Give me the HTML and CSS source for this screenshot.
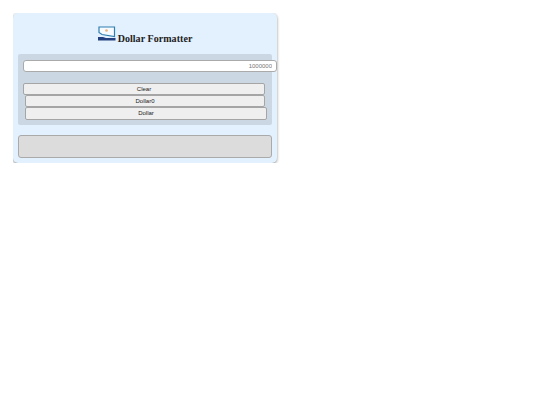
FILE: index.html
```html
<!DOCTYPE html>
<html>
<head>
    <title>Dollar Formatter</title>
    <meta http-equiv="Content-Type" content="text/html; charset=utf-8" />
    <link rel="stylesheet" href="styles.css">
</head>

<body>
    <div class="card">
        <h1>
            <svg class="logo" width="18" height="15" viewBox="0 0 18 15">
                <path d="M1 1H16.500V10.500L4 8.500L1 6.500Z" fill="#f6fbff" stroke="#2f7fb0" stroke-width="1.200"/>
                <circle cx="8.500" cy="4.500" r="1.300" fill="#eeb27c"/>
                <path d="M0 11H5L8 12H17.500V14.500H0Z" fill="#24407f"/>
            </svg>
            <span class="title">Dollar Formatter</span>
        </h1>
        <div class="panel">
            <input type="text" class="amount" value="1000000">
            <div class="buttons">
                <button class="btn btn-clear">Clear</button>
                <button class="btn btn-dollar0">Dollar0</button>
                <button class="btn btn-dollar">Dollar</button>
            </div>
        </div>
        <div class="result"></div>
    </div>
</body>
</html>
```

FILE: styles.css
```css
body {
    margin: 13px;
    font-family: "Liberation Sans", Arial, sans-serif;
    background-color: white;
}
.card {
    width: 264px;
    height: 150px;
    box-sizing: border-box;
    padding: 13px 5px 0;
    background-color: #e3f0fd;
    border-radius: 5px;
    box-shadow: 0 1px 3px rgba(0, 0, 0, 0.45);
}
h1 {
    display: flex;
    justify-content: center;
    align-items: flex-end;
    gap: 2px;
    height: 15px;
    margin: 0 0 13px;
    font-family: "Liberation Serif", "Times New Roman", serif;
    font-size: 10px;
    font-weight: bold;
    line-height: 9px;
    letter-spacing: 0.050px;
    color: #222;
}
.logo {
    display: block;
}
.title {
    margin-bottom: -2px;
}
.panel {
    height: 71px;
    box-sizing: border-box;
    padding: 6px 5px 0;
    background-color: #ccd7e4;
    border-radius: 2px;
}
.amount {
    display: block;
    width: 254px;
    height: 11.500px;
    box-sizing: border-box;
    padding: 0 4px;
    border: 1px solid #aaa;
    border-radius: 3px;
    background-color: white;
    font-family: "Liberation Sans", Arial, sans-serif;
    font-size: 6px;
    color: #777;
    text-align: right;
}
.buttons {
    margin-top: 11.500px;
}
.btn {
    display: block;
    height: 12px;
    padding: 0;
    border: 1px solid #a5a5a5;
    border-radius: 2px;
    background-color: #efefef;
    font-family: "Liberation Sans", Arial, sans-serif;
    font-size: 6px;
    color: #222;
    box-sizing: border-box;
}
.btn-clear {
    width: 242px;
}
.btn-dollar0 {
    width: 240px;
    margin-left: 2px;
}
.btn-dollar {
    width: 242px;
    margin-left: 2px;
    height: 12.500px;
}
.result {
    height: 23px;
    margin-top: 10px;
    box-sizing: border-box;
    background-color: #dcdcdc;
    border: 1px solid #aaa;
    border-radius: 3px;
}
```
